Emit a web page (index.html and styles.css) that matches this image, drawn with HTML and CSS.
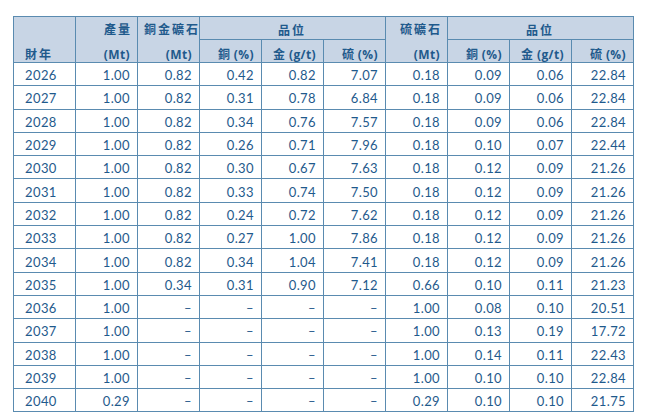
FILE: index.html
```html
<!DOCTYPE html>
<html>
<head>
<meta charset="utf-8">
<link rel="stylesheet" href="styles.css">
</head>
<body>
<table class="grid">
<colgroup>
<col class="c"><col class="c"><col class="c"><col class="c"><col class="c"><col class="c"><col class="c"><col class="c"><col class="c"><col class="c">
</colgroup>
<thead>
<tr>
<th rowspan="2" class="yr"><div class="two"><span></span><span>財年</span></div></th>
<th rowspan="2"><div class="two"><span>產量</span><span>(Mt)</span></div></th>
<th rowspan="2"><div class="two"><span>銅金礦石</span><span>(Mt)</span></div></th>
<th colspan="3" class="ctr top">品位</th>
<th rowspan="2"><div class="two"><span>硫礦石</span><span>(Mt)</span></div></th>
<th colspan="3" class="ctr top">品位</th>
</tr>
<tr>
<th class="sub">銅 (%)</th><th class="sub">金 (g/t)</th><th class="sub">硫 (%)</th>
<th class="sub">銅 (%)</th><th class="sub">金 (g/t)</th><th class="sub">硫 (%)</th>
</tr>
</thead>
<tbody>
<tr><td>2026</td><td>1.00</td><td>0.82</td><td>0.42</td><td>0.82</td><td>7.07</td><td>0.18</td><td>0.09</td><td>0.06</td><td>22.84</td></tr>
<tr><td>2027</td><td>1.00</td><td>0.82</td><td>0.31</td><td>0.78</td><td>6.84</td><td>0.18</td><td>0.09</td><td>0.06</td><td>22.84</td></tr>
<tr><td>2028</td><td>1.00</td><td>0.82</td><td>0.34</td><td>0.76</td><td>7.57</td><td>0.18</td><td>0.09</td><td>0.06</td><td>22.84</td></tr>
<tr><td>2029</td><td>1.00</td><td>0.82</td><td>0.26</td><td>0.71</td><td>7.96</td><td>0.18</td><td>0.10</td><td>0.07</td><td>22.44</td></tr>
<tr><td>2030</td><td>1.00</td><td>0.82</td><td>0.30</td><td>0.67</td><td>7.63</td><td>0.18</td><td>0.12</td><td>0.09</td><td>21.26</td></tr>
<tr><td>2031</td><td>1.00</td><td>0.82</td><td>0.33</td><td>0.74</td><td>7.50</td><td>0.18</td><td>0.12</td><td>0.09</td><td>21.26</td></tr>
<tr><td>2032</td><td>1.00</td><td>0.82</td><td>0.24</td><td>0.72</td><td>7.62</td><td>0.18</td><td>0.12</td><td>0.09</td><td>21.26</td></tr>
<tr><td>2033</td><td>1.00</td><td>0.82</td><td>0.27</td><td>1.00</td><td>7.86</td><td>0.18</td><td>0.12</td><td>0.09</td><td>21.26</td></tr>
<tr><td>2034</td><td>1.00</td><td>0.82</td><td>0.34</td><td>1.04</td><td>7.41</td><td>0.18</td><td>0.12</td><td>0.09</td><td>21.26</td></tr>
<tr><td>2035</td><td>1.00</td><td>0.34</td><td>0.31</td><td>0.90</td><td>7.12</td><td>0.66</td><td>0.10</td><td>0.11</td><td>21.23</td></tr>
<tr><td>2036</td><td>1.00</td><td>–</td><td>–</td><td>–</td><td>–</td><td>1.00</td><td>0.08</td><td>0.10</td><td>20.51</td></tr>
<tr><td>2037</td><td>1.00</td><td>–</td><td>–</td><td>–</td><td>–</td><td>1.00</td><td>0.13</td><td>0.19</td><td>17.72</td></tr>
<tr><td>2038</td><td>1.00</td><td>–</td><td>–</td><td>–</td><td>–</td><td>1.00</td><td>0.14</td><td>0.11</td><td>22.43</td></tr>
<tr><td>2039</td><td>1.00</td><td>–</td><td>–</td><td>–</td><td>–</td><td>1.00</td><td>0.10</td><td>0.10</td><td>22.84</td></tr>
<tr><td>2040</td><td>0.29</td><td>–</td><td>–</td><td>–</td><td>–</td><td>0.29</td><td>0.10</td><td>0.10</td><td>21.75</td></tr>
</tbody>
</table>
</body>
</html>
```
FILE: styles.css
```css
html, body {
  margin: 0;
  padding: 0;
  background: #ffffff;
}
body {
  padding: 16px 0 0 13px;
  font-family: Lato, "Open Sans", "Noto Sans CJK TC", sans-serif;
  color: #1f5a8c;
}
.grid {
  border-collapse: collapse;
  table-layout: fixed;
  width: 620px;
  font-size: 13px;
}
.c {
  width: 62px;
}
.grid th, .grid td {
  border: 1px solid #5a8bb0;
  padding: 3px 7px 0 6px;
  height: 19.3px;
  line-height: 15px;
  text-align: right;
  white-space: nowrap;
}
.grid th {
  background: #c8d5e5;
  font-family: "Open Sans", "Noto Sans CJK TC", sans-serif;
  font-weight: 700;
  font-size: 12px;
  letter-spacing: 0.4px;
  vertical-align: middle;
}
.grid th.top {
  padding-top: 5px;
  height: 17px;
}
.grid th.sub {
  padding-top: 6px;
  height: 16px;
}
.grid th.ctr {
  text-align: center;
  letter-spacing: 2px;
}
.two {
  display: flex;
  flex-direction: column;
  justify-content: space-between;
  height: 40px;
  padding-top: 2px;
}
.two span:first-child {
  letter-spacing: 2px;
  margin-right: -2px;
}
.grid th.yr {
  text-align: left;
  padding-left: 11px;
  letter-spacing: 2px;
}
.grid td:first-child {
  text-align: left;
  padding-left: 11px;
}
.grid td {
  letter-spacing: 0.4px;
}
```
